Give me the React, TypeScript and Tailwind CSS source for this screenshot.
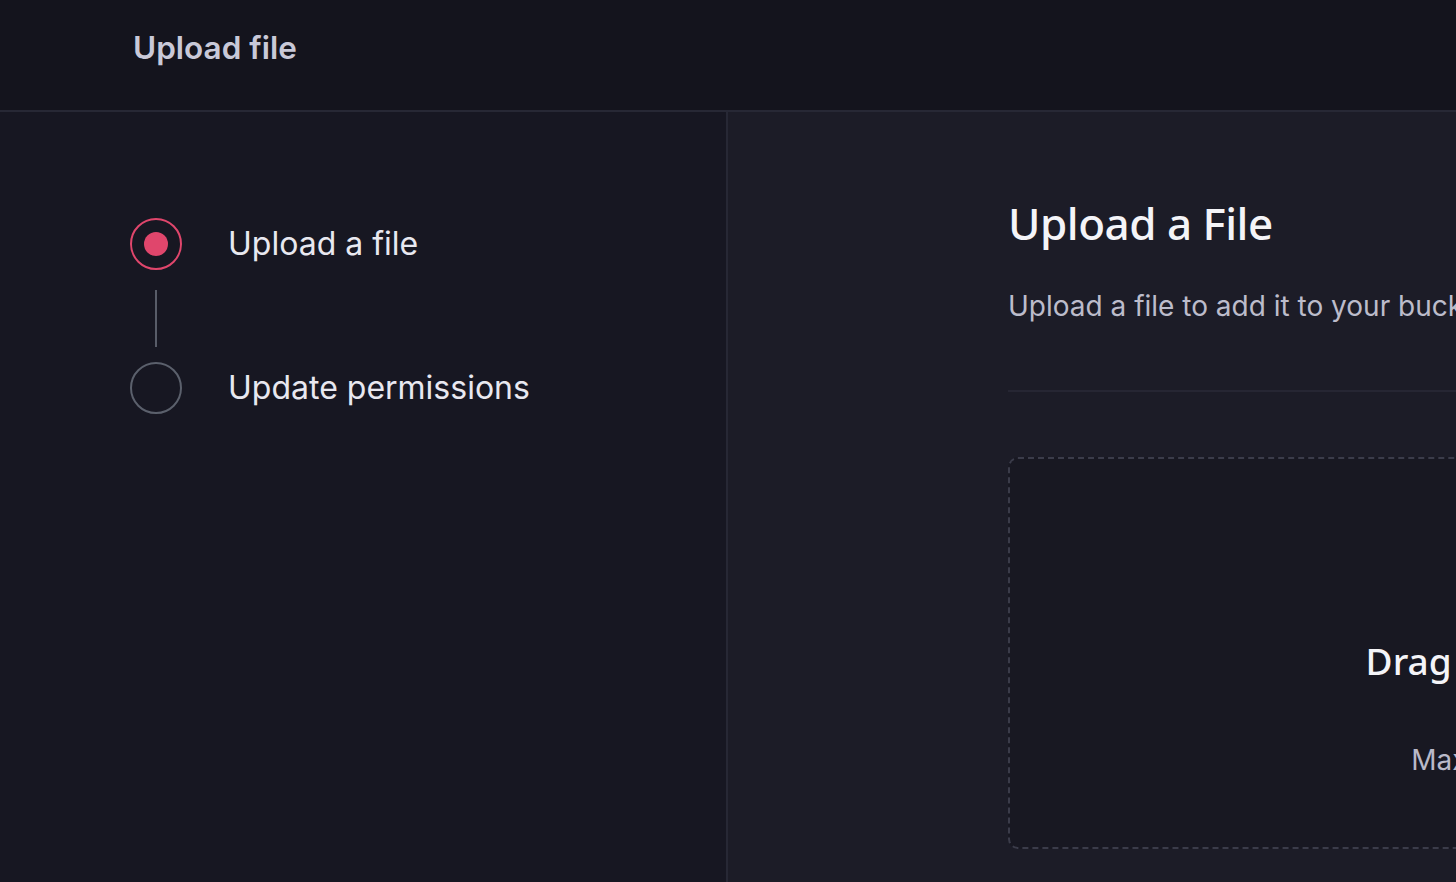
import React from "react";

export default function App() {
  return (
    <div className="w-[1456px] h-[882px] overflow-hidden flex flex-col bg-[#171722] font-['Inter',sans-serif]">
      <header className="h-[112px] shrink-0 bg-[#14141d] border-b-2 border-[#272835] flex items-center pl-[133px] pb-[15px]">
        <h1 className="text-[31.5px] font-semibold text-[#c9c9d8] leading-none">Upload file</h1>
      </header>
      <div className="flex flex-1 min-h-0">
        <aside className="w-[728px] shrink-0 bg-[#171722] border-r-2 border-[#272835] pl-[130px] pt-[106px]">
          <div className="flex items-center gap-[46px]">
            <div className="w-[52px] h-[52px] rounded-full border-2 border-[#e0466c] flex items-center justify-center">
              <div className="w-[24px] h-[24px] rounded-full bg-[#e0466c]" />
            </div>
            <span className="text-[32px] leading-[40px] text-[#e8e8f0]">Upload a file</span>
          </div>
          <div className="w-[52px] flex justify-center pt-[20px] pb-[15px]">
            <div className="w-[2px] h-[57px] bg-[#585c68]" />
          </div>
          <div className="flex items-center gap-[46px]">
            <div className="w-[52px] h-[52px] rounded-full border-2 border-[#5b606c]" />
            <span className="text-[32px] leading-[40px] text-[#e8e8f0]">Update permissions</span>
          </div>
        </aside>
        <main className="flex-1 bg-[#1c1c27] pl-[280px] pt-[84px] overflow-hidden">
          <div className="w-[1066px]">
            <h2 className="text-[44px] leading-[54px] font-medium text-[#f4f4f8] font-['Noto_Sans',sans-serif] tracking-[-0.5px]">Upload a File</h2>
            <p className="mt-[38px] text-[28px] leading-[36px] text-[#bcbccb] whitespace-nowrap">Upload a file to add it to your bucket.</p>
            <div className="mt-[66px] h-[2px] bg-[#262633]" />
            <div className="mt-[65px] h-[392px] rounded-[10px] border-2 border-dashed border-[#3b3c4a] bg-[#181822] flex flex-col items-center pt-[180px]">
              <div className="text-[37px] leading-[44px] font-medium text-[#f4f4f8] font-['Noto_Sans',sans-serif] whitespace-nowrap">Drag and drop a file</div>
              <div className="mt-[59px] text-[28px] leading-[36px] text-[#b9b9c8] whitespace-nowrap">Max file size: 50MB</div>
            </div>
          </div>
        </main>
      </div>
    </div>
  );
}
